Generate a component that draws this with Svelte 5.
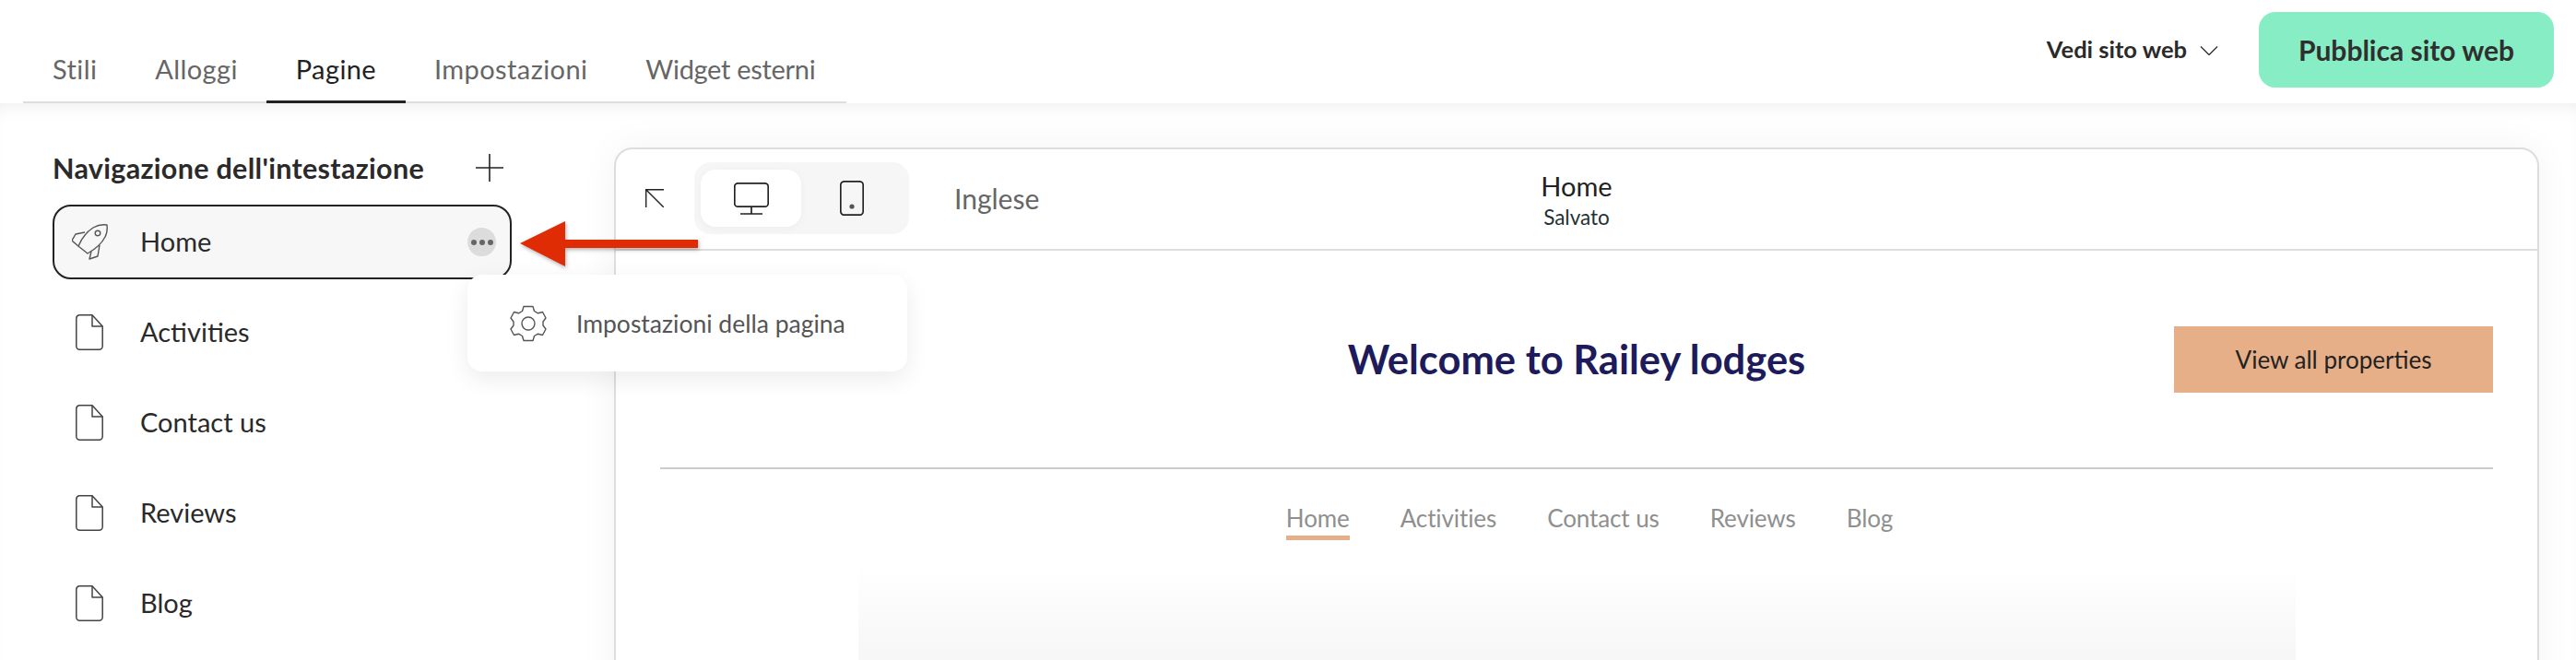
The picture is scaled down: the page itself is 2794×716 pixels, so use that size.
<script>
  const tabs = ['Stili', 'Alloggi', 'Pagine', 'Impostazioni', 'Widget esterni'];
  const pages = ['Activities', 'Contact us', 'Reviews', 'Blog'];
  const siteNav = ['Home', 'Activities', 'Contact us', 'Reviews', 'Blog'];
</script>

<div class="page">
  <header class="top">
    <nav class="tabs">
      {#each tabs as t}
        <span class="tab" class:active={t === 'Pagine'}>{t}</span>
      {/each}
    </nav>
    <div class="actions">
      <span class="view">Vedi sito web</span>
      <svg class="chev" viewBox="0 0 20 10" fill="none" stroke="#333" stroke-width="1.4"><path d="M1 .5l9 9 9-9"/></svg>
      <button class="publish">Pubblica sito web</button>
    </div>
  </header>

  <div class="body">
    <aside class="side">
      <div class="side-head">
        <h2>Navigazione dell'intestazione</h2>
        <svg class="plus" viewBox="0 0 30 30" stroke="#222" stroke-width="1.6"><path d="M15 0v30M0 15h30"/></svg>
      </div>
      <div class="row current">
        <svg class="rocket" viewBox="0 0 40 40" fill="none" stroke="#555" stroke-width="1.4" stroke-linejoin="round">
          <path d="M38 1C38 1 30 0 23 4C15 9 10 17 7 24L17 32C24 28 32 22 36 14C39 8 38 1 38 1Z"/>
          <path d="M7 24L0 18L4 11L14 9"/>
          <path d="M21 30L19 38L28 35L30 23"/>
          <circle cx="28" cy="10" r="2.8"/>
        </svg>
        <span class="label">Home</span>
        <span class="more"><i></i><i></i><i></i></span>
      </div>
      {#each pages as p}
        <div class="row">
          <svg class="doc" viewBox="0 0 30 39" fill="none" stroke="#444" stroke-width="1.5" stroke-linejoin="round">
            <path d="M4 .8H18L29.2 13V34.5A3.7 3.7 0 0 1 25.5 38.2H4.5A3.7 3.7 0 0 1 .8 34.5V4.5A3.7 3.7 0 0 1 4 .8Z"/>
            <path d="M18 .8V13H29.2"/>
          </svg>
          <span class="label">{p}</span>
        </div>
      {/each}
    </aside>

    <section class="card">
      <div class="toolbar">
        <svg class="back" viewBox="0 0 20 20" fill="none" stroke="#222" stroke-width="1.4"><path d="M.7 20V.7H20M.7.7L20 20"/></svg>
        <div class="seg">
          <span class="seg-btn on">
            <svg width="38" height="35" viewBox="0 0 38 35" fill="none" stroke="#222" stroke-width="1.7"><rect x=".8" y=".8" width="36.4" height="25.4" rx="3.5"/><path d="M19 26v8M7 34h24"/></svg>
          </span>
          <span class="seg-btn">
            <svg width="26" height="38" viewBox="0 0 26 38" fill="none" stroke="#222" stroke-width="1.7"><rect x=".8" y=".8" width="24.4" height="36.4" rx="4"/><circle cx="13" cy="28" r="2.6" fill="#555" stroke="none"/></svg>
          </span>
        </div>
        <span class="lang">Inglese</span>
        <div class="title">
          <span class="t1">Home</span>
          <span class="t2">Salvato</span>
        </div>
      </div>
      <div class="preview">
        <div class="p-head">
          <svg class="logo-tail" width="10" height="5" viewBox="0 0 10 5" fill="none" stroke="#8f8bb5" stroke-width="2"><path d="M1 0C2 4 8 4 9 0"/></svg>
          <h1>Welcome to Railey lodges</h1>
          <span class="cta">View all properties</span>
        </div>
        <hr />
        <nav class="p-nav">
          {#each siteNav as n}
            <span class:sel={n === 'Home'}>{n}</span>
          {/each}
        </nav>
        <div class="hero"></div>
      </div>
    </section>
  </div>

  <div class="popup">
    <svg class="gear" viewBox="0 0 40 40" fill="none" stroke="#555" stroke-width="1.4" stroke-linejoin="round">
      <path d="M15 1.5H25L26.5 6.5L30.5 8.8L35.5 7.5L39 14L36 18V22L39 26L35.5 32.5L30.5 31.2L26.5 33.5L25 38.5H15L13.5 33.5L9.5 31.2L4.5 32.5L1 26L4 22V18L1 14L4.5 7.5L9.5 8.8L13.5 6.5Z"/>
      <circle cx="20" cy="20" r="7"/>
    </svg>
    <span>Impostazioni della pagina</span>
  </div>

  <svg class="arrow" viewBox="0 0 200 60" width="200" height="60">
    <path d="M1 29L50 5V25H194V34H50V54Z" fill="#df2c05"/>
  </svg>
</div>

<style>
  :global(body) { margin: 0; background: #fff; }
  .page {
    position: relative;
    width: 2794px;
    height: 716px;
    overflow: hidden;
    font-family: Lato, "Noto Sans", sans-serif;
    color: #222;
  }
  .top {
    position: relative;
    z-index: 2;
    height: 112px;
    box-sizing: border-box;
    display: flex;
    justify-content: space-between;
    padding: 13px 24px 0 25px;
    background: #fff;
  }
  .tabs {
    display: flex;
    align-self: flex-end;
    width: 893px;
    height: 55px;
    box-sizing: border-box;
    padding-left: 32px;
    gap: 63px;
    border-bottom: 2px solid #ddd;
  }
  .tab {
    position: relative;
    font-size: 29px;
    line-height: 36px;
    letter-spacing: .4px;
    color: #666;
    white-space: nowrap;
  }
  .tab:last-child { letter-spacing: -.3px; }
  .tab.active { color: #222; }
  .tab.active::after {
    content: '';
    position: absolute;
    left: -32px;
    right: -32px;
    bottom: -2px;
    height: 3px;
    background: #222;
  }
  .actions { display: flex; align-items: flex-start; }
  .view { font-size: 25.5px; font-weight: 700; line-height: 80px; color: #2a2a2a; }
  .chev { width: 20px; height: 10px; margin: 37px 44px 0 14px; }
  .publish {
    width: 320px;
    height: 82px;
    border: 0;
    border-radius: 18px;
    background: #87edc4;
    font: 700 30px Lato, sans-serif;
    color: #2f2f2f;
  }
  .body {
    display: flex;
    height: 604px;
    background: #fff;
    box-shadow: inset 0 14px 22px -14px rgba(0,0,0,.09);
  }
  .side { width: 666px; flex: none; padding: 54px 0 0 57px; box-sizing: border-box; }
  .side-head { display: flex; align-items: center; height: 32px; gap: 56px; }
  h2 { margin: 0; font-size: 30.5px; font-weight: 700; letter-spacing: .3px; color: #2a2a2a; white-space: nowrap; }
  .plus { width: 30px; height: 30px; flex: none; }
  .row {
    width: 498px;
    height: 81px;
    margin-top: 17px;
    box-sizing: border-box;
    display: flex;
    align-items: center;
    padding-left: 25px;
    position: relative;
  }
  .row + .row { margin-top: 17px; }
  .current {
    margin-top: 24px;
    border: 2px solid #222;
    border-radius: 20px;
    background: #f7f7f7;
    padding-left: 19px;
  }
  .label { font-size: 29px; line-height: 34px; margin-top: -2px; color: #2a2a2a; margin-left: 40px; }
  .current .label { margin-left: 34px; }
  .rocket { width: 40px; height: 40px; }
  .doc { width: 30px; height: 39px; }
  .more {
    position: absolute;
    right: 15px;
    top: 23px;
    width: 31px;
    height: 31px;
    border-radius: 50%;
    background: #dcdcdc;
    display: flex;
    align-items: center;
    justify-content: center;
    gap: 3px;
  }
  .more i { width: 6px; height: 6px; border-radius: 50%; background: #666; }
  .card {
    width: 2088px;
    height: 700px;
    margin-top: 48px;
    box-sizing: border-box;
    border: 2px solid #ddd;
    border-radius: 20px;
    background: #fff;
    box-shadow: 0 0 40px rgba(0,0,0,.05);
    flex: none;
  }
  .toolbar {
    position: relative;
    height: 110px;
    box-sizing: border-box;
    border-bottom: 2px solid #ddd;
    display: flex;
    align-items: center;
    padding-left: 32px;
  }
  .back { width: 20px; height: 20px; margin-top: -2px; }
  .seg {
    margin-left: 33px;
    width: 233px;
    height: 78px;
    margin-top: -2px;
    box-sizing: border-box;
    padding: 8px 7px;
    border-radius: 18px;
    background: #f6f6f6;
    display: flex;
  }
  .seg-btn { display: flex; align-items: center; justify-content: center; height: 62px; border-radius: 16px; }
  .seg-btn.on { width: 109px; background: #fff; box-shadow: 0 2px 10px rgba(0,0,0,.04); }
  .seg-btn:not(.on) { width: 110px; }
  .lang { margin-left: 49px; margin-top: -3px; font-size: 30px; color: #666; }
  .title {
    position: absolute;
    left: 0;
    right: 0;
    top: 21px;
    display: flex;
    flex-direction: column;
    align-items: center;
    pointer-events: none;
  }
  .t1 { font-size: 29px; line-height: 38px; color: #222; }
  .t2 { font-size: 22.5px; line-height: 30px; color: #1f3333; }
  .preview { padding: 0 48px; }
  .p-head { position: relative; display: flex; justify-content: flex-end; align-items: center; padding-top: 82px; height: 72px; }
  .logo-tail { position: absolute; left: 1px; top: 127px; }
  h1 { position: absolute; left: 0; right: 0; margin: 0; top: 91px; text-align: center; font-size: 43.5px; font-weight: 700; color: #1d1b5b; }
  .cta {
    width: 346px;
    height: 72px;
    display: flex;
    align-items: center;
    justify-content: center;
    background: #e6af88;
    font-size: 26px;
    color: #222;
    position: relative;
  }
  hr { margin: 81px 0 0; border: 0; border-top: 2px solid #ccc; }
  .p-nav { display: flex; justify-content: center; gap: 55px; margin: 37px 0 0 28px; font-size: 26px; letter-spacing: -.1px; color: #8f8f8f; }
  .p-nav span { padding-bottom: 3px; border-bottom: 5px solid transparent; }
  .p-nav .sel { border-bottom-color: #e6af88; }
  .hero {
    width: 1559px;
    height: 120px;
    margin: 26px auto 0;
    background: linear-gradient(#fff, #f7f7f7 80%);
  }
  .popup {
    position: absolute;
    z-index: 3;
    left: 507px;
    top: 298px;
    width: 477px;
    height: 105px;
    box-sizing: border-box;
    padding-left: 46px;
    display: flex;
    align-items: center;
    gap: 32px;
    border-radius: 16px;
    background: #fff;
    box-shadow: 0 8px 26px rgba(0,0,0,.08);
    font-size: 26.5px;
    color: #555;
  }
  .gear { width: 40px; height: 40px; }
  .arrow {
    position: absolute;
    z-index: 4;
    left: 563px;
    top: 235px;
    filter: drop-shadow(1px 2px 2px rgba(0,0,0,.3));
  }
</style>
